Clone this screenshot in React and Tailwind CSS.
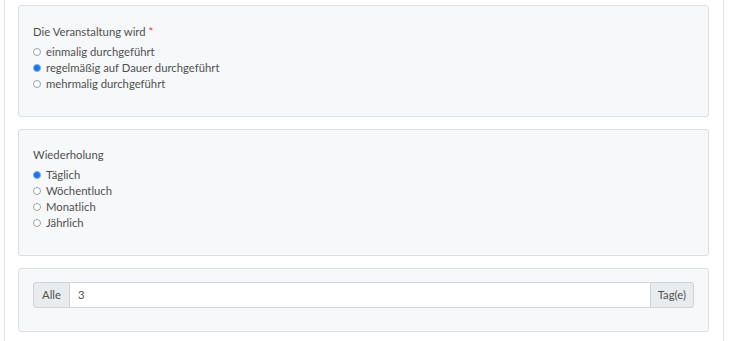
function Radio({ label, checked }) {
  return (
    <label className="flex items-center h-[16px] gap-[5px] text-[11.3px] text-[#505050]">
      <input
        type="radio"
        defaultChecked={checked}
        readOnly
        className="m-0 w-[8px] h-[8px] appearance-none rounded-full border border-[#a0a0a0] bg-white checked:bg-[#1a73e8] checked:border-[#7aaaf0]"
      />
      <span>{label}</span>
    </label>
  );
}

function Card({ className = "", children }) {
  return (
    <div className={`bg-[#f7f8f9] border border-[#dcdfe2] rounded-[3px] px-[14px] ${className}`}>
      {children}
    </div>
  );
}

export default function App() {
  return (
    <div className="w-[731px] h-[341px] bg-white overflow-hidden font-['Lato',sans-serif]">
      <div className="ml-[4px] w-[720px] h-[341px] border-x border-[#e2e4e6] pl-[13px] pr-[14px] pt-[5px] flex flex-col gap-[12px]">
        <Card className="h-[112px] pt-[19px]">
          <div className="text-[11.3px] text-[#505050] leading-[14px] mb-[5px]">
            Die Veranstaltung wird <span className="text-[#dc3545]">*</span>
          </div>
          <Radio label="einmalig durchgeführt" />
          <Radio label="regelmäßig auf Dauer durchgeführt" checked />
          <Radio label="mehrmalig durchgeführt" />
        </Card>
        <Card className="h-[127px] pt-[18px]">
          <div className="text-[11.3px] text-[#505050] leading-[14px] mb-[5px]">Wiederholung</div>
          <Radio label="Täglich" checked />
          <Radio label="Wöchentluch" />
          <Radio label="Monatlich" />
          <Radio label="Jährlich" />
        </Card>
        <Card className="h-[64px] pt-[13px]">
          <div className="flex h-[26px] text-[11.3px] text-[#505050]">
            <span className="flex items-center px-[8px] bg-[#e9ecef] border border-[#ced4da] rounded-l-[3px]">Alle</span>
            <input
              defaultValue="3"
              className="flex-1 min-w-0 bg-white border-y border-[#ced4da] px-[8px] outline-none text-[11.3px] text-[#505050]"
            />
            <span className="flex items-center px-[7px] bg-[#e9ecef] border border-[#ced4da] rounded-r-[3px]">Tag(e)</span>
          </div>
        </Card>
      </div>
    </div>
  );
}
